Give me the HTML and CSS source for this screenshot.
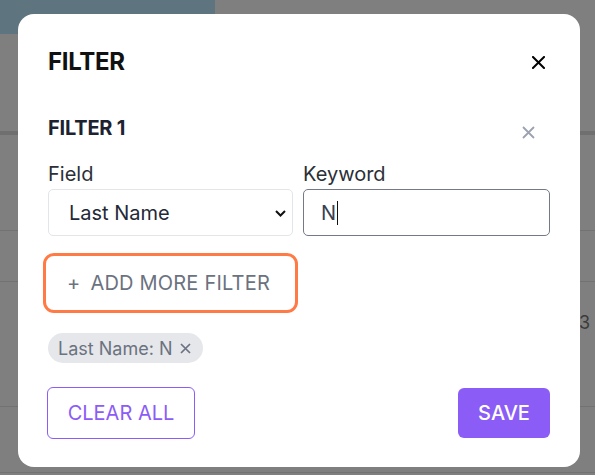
FILE: index.html
```html
<!DOCTYPE html>
<html lang="en">
<head>
<meta charset="utf-8">
<title>Filter</title>
<link rel="stylesheet" href="styles.css">
</head>
<body>
<div class="page">
  <div class="topbar"><div class="brand"></div></div>
  <div class="spacer"></div>
  <div class="band"></div>
  <div class="row row-a"></div>
  <div class="row row-b"></div>
  <div class="row row-c"><span class="cell-num">3</span></div>
  <div class="row row-d"></div>
</div>

<div class="modal">
  <div class="modal-header">
    <h2 class="modal-title">FILTER</h2>
    <button class="icon-btn close-btn" aria-label="Close">
      <svg width="13" height="13" viewBox="0 0 13 13"><path d="M1 1L12 12M12 1L1 12" stroke="#000" stroke-width="2" stroke-linecap="square" fill="none"/></svg>
    </button>
  </div>

  <div class="filter-head">
    <h3 class="filter-title">FILTER 1</h3>
    <button class="icon-btn remove-btn" aria-label="Remove filter">
      <svg width="13" height="13" viewBox="0 0 13 13"><path d="M1 1L12 12M12 1L1 12" stroke="#9ca3af" stroke-width="1.8" fill="none"/></svg>
    </button>
  </div>

  <div class="fields">
    <div class="field">
      <div class="label">Field</div>
      <div class="select">
        <span>Last Name</span>
        <svg class="chev" width="11" height="7" viewBox="0 0 11 7"><path d="M1 1L5.5 5.5L10 1" stroke="#111" stroke-width="2" fill="none"/></svg>
      </div>
    </div>
    <div class="field">
      <div class="label">Keyword</div>
      <div class="input"><span>N</span><span class="caret"></span></div>
    </div>
  </div>

  <div class="add-row">
    <button class="add-btn"><span class="plus">+</span>ADD MORE FILTER</button>
  </div>

  <div class="chips">
    <span class="chip">Last Name: N
      <svg class="chip-x" width="11" height="11" viewBox="0 0 11 11"><path d="M1 1L10 10M10 1L1 10" stroke="#6b7280" stroke-width="1.7" fill="none"/></svg>
    </span>
  </div>

  <div class="footer">
    <button class="btn btn-outline">CLEAR ALL</button>
    <button class="btn btn-primary">SAVE</button>
  </div>
</div>
</body>
</html>
```

FILE: styles.css
```css
* { box-sizing: border-box; }

html, body {
  margin: 0;
  padding: 0;
}

body {
  width: 595px;
  height: 475px;
  overflow: hidden;
  background: #7f7f7f;
  font-family: Inter, "Open Sans", sans-serif;
  position: relative;
}

/* background page (dimmed) */
.page {
  width: 595px;
}
.topbar {
  height: 34px;
}
.brand {
  width: 215px;
  height: 34px;
  background: #5e7580;
}
.spacer { height: 97px; }
.band { height: 4px; background: #6f6f6f; }
.row { border-bottom: 1px solid #727272; }
.row-a { height: 96px; }
.row-b { height: 51px; }
.row-c { height: 125px; }
.row-d { height: 66px; }
.cell-num {
  display: block;
  padding: 31px 0 0 579px;
  font-size: 18px;
  line-height: 20px;
  color: #3a3a3a;
}

/* modal */
.modal {
  position: absolute;
  left: 18px;
  top: 14px;
  width: 562px;
  height: 453px;
  background: #fff;
  border-radius: 16px;
  padding: 32px 30px 28px;
  display: flex;
  flex-direction: column;
}

.icon-btn {
  border: 0;
  background: none;
  padding: 0;
  display: flex;
  cursor: pointer;
}

.modal-header {
  height: 32px;
  display: flex;
  align-items: center;
  justify-content: space-between;
}
.modal-title {
  margin: 0;
  font-size: 24px;
  line-height: 32px;
  font-weight: 700;
  color: #111;
  letter-spacing: -0.3px;
}
.close-btn { margin-right: 5px; }

.filter-head {
  margin-top: 36px;
  height: 28px;
  display: flex;
  align-items: center;
  justify-content: space-between;
}
.filter-title {
  margin: 0;
  font-size: 20px;
  line-height: 28px;
  font-weight: 700;
  color: #1c2230;
  letter-spacing: -0.2px;
}
.remove-btn { margin-right: 15px; margin-top: 8px; }

.fields {
  margin-top: 20px;
  display: grid;
  grid-template-columns: 245px 1fr;
  column-gap: 10px;
}
.label {
  font-size: 20px;
  line-height: 24px;
  color: #2b2f36;
  margin-bottom: 3px;
}
.select {
  height: 47px;
  border: 1px solid #e3e5e9;
  border-radius: 5px;
  display: flex;
  align-items: center;
  justify-content: space-between;
  padding: 0 6px 0 20px;
  font-size: 20px;
  color: #1f2937;
}
.chev { margin-top: 1px; }
.input {
  height: 47px;
  border: 1px solid #737985;
  border-radius: 5px;
  display: flex;
  align-items: center;
  padding-left: 17px;
  font-size: 20px;
  color: #374151;
}
.caret {
  display: inline-block;
  width: 1px;
  height: 24px;
  background: #111;
  margin-left: 1px;
}

.add-row { margin-top: 22px; }
.add-btn {
  width: 245px;
  height: 50px;
  border: 0;
  background: #fff;
  border-radius: 6px;
  outline: 3px solid #ff7a45;
  outline-offset: 2px;
  font-family: inherit;
  font-size: 20px;
  color: #6b7280;
  letter-spacing: 0.2px;
  display: flex;
  align-items: center;
  justify-content: center;
  padding-left: 2px;
}
.plus { margin-right: 10px; }

.chips { margin-top: 25px; display: flex; }
.chip {
  height: 30px;
  display: inline-flex;
  align-items: center;
  background: #e5e7eb;
  border-radius: 15px;
  padding: 0 12px 0 10px;
  font-size: 18px;
  color: #6b7280;
}
.chip-x {
  margin-left: 8px;
}

.footer {
  margin-top: 24px;
  display: flex;
  align-items: center;
  justify-content: space-between;
}
.btn {
  font-family: inherit;
  font-size: 20px;
  border-radius: 6px;
  cursor: pointer;
}
.btn-outline {
  width: 148px;
  height: 52px;
  border: 1px solid #8b5cf6;
  background: #fff;
  color: #8b5cf6;
  margin-left: -1px;
}
.btn-primary {
  width: 92px;
  height: 50px;
  border: 0;
  background: #8b5cf6;
  color: #fff;
  font-weight: 500;
}
```
